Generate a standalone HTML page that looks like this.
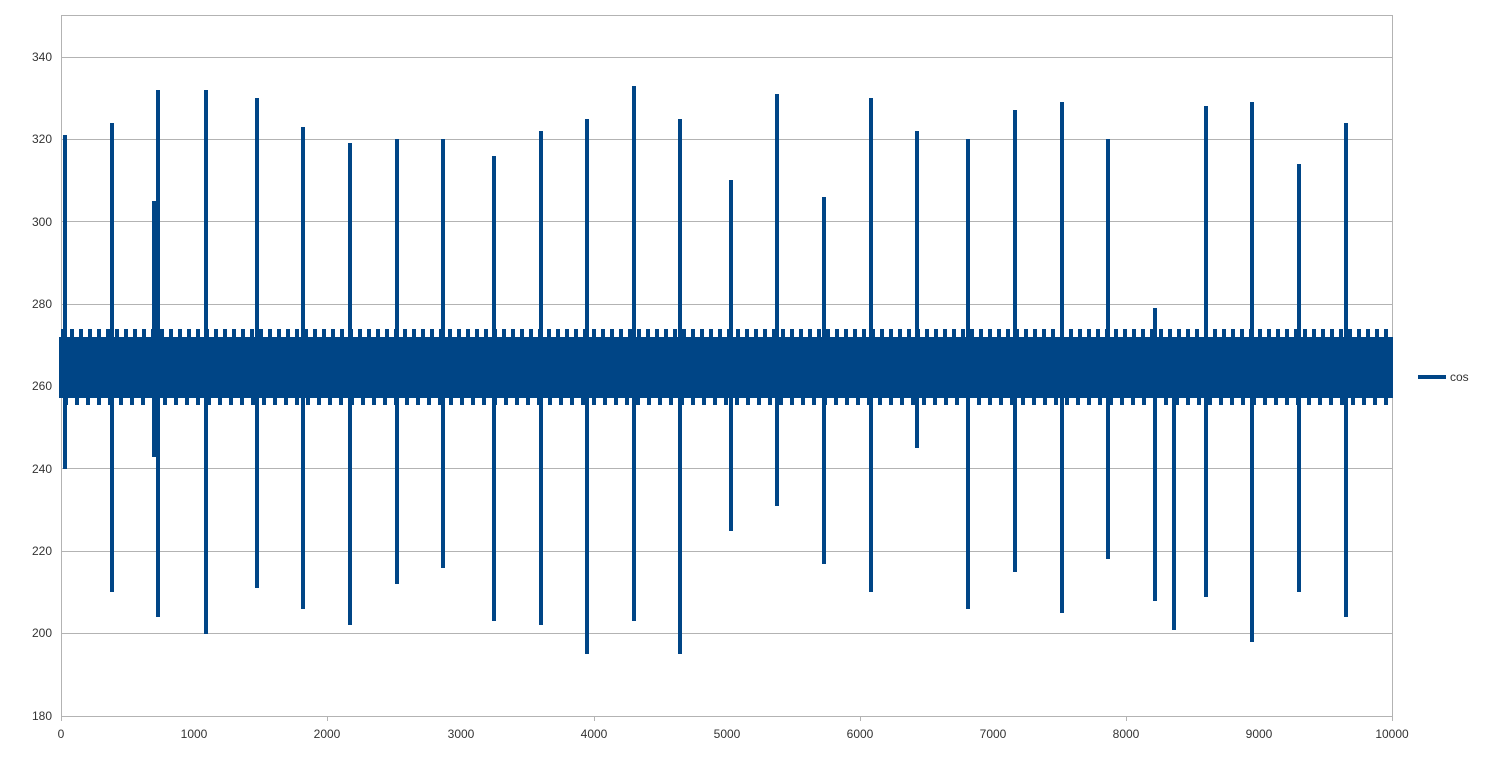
<!DOCTYPE html><html><head><style>body{margin:0;background:#fff;width:1512px;height:756px;overflow:hidden}text{font-family:"Liberation Sans",sans-serif;font-size:12px;fill:#333}</style></head><body>
<svg width="1512" height="756" xmlns="http://www.w3.org/2000/svg">
<defs>
<pattern id="t" x="61" y="0" width="9" height="10" patternUnits="userSpaceOnUse"><rect x="0" y="0" width="4" height="10" fill="#004586"/></pattern>
<pattern id="t2" x="64" y="0" width="11" height="10" patternUnits="userSpaceOnUse"><rect x="0" y="0" width="4" height="10" fill="#004586"/></pattern>
</defs>
<g stroke="#b3b3b3" stroke-width="1">
<line x1="61" y1="15.5" x2="1392" y2="15.5"/>
<line x1="61" y1="57.5" x2="1392" y2="57.5"/>
<line x1="61" y1="139.5" x2="1392" y2="139.5"/>
<line x1="61" y1="221.5" x2="1392" y2="221.5"/>
<line x1="61" y1="304.5" x2="1392" y2="304.5"/>
<line x1="61" y1="386.5" x2="1392" y2="386.5"/>
<line x1="61" y1="468.5" x2="1392" y2="468.5"/>
<line x1="61" y1="551.5" x2="1392" y2="551.5"/>
<line x1="61" y1="633.5" x2="1392" y2="633.5"/>
<line x1="61" y1="716.5" x2="1392" y2="716.5"/>
<line x1="61.5" y1="15" x2="61.5" y2="721"/>
<line x1="1392.5" y1="15" x2="1392.5" y2="721"/>
<line x1="327.5" y1="716" x2="327.5" y2="721"/><line x1="594.5" y1="716" x2="594.5" y2="721"/><line x1="860.5" y1="716" x2="860.5" y2="721"/><line x1="1126.5" y1="716" x2="1126.5" y2="721"/>
</g>
<rect x="59" y="337" width="1334" height="61" fill="#004586"/>
<rect x="61" y="329" width="1331" height="9" fill="url(#t)"/>
<rect x="61" y="397" width="1331" height="8" fill="url(#t2)"/>
<g stroke="#004586" stroke-width="4">
<line x1="65" y1="135" x2="65" y2="469"/>
<line x1="112" y1="123" x2="112" y2="592"/>
<line x1="158" y1="90" x2="158" y2="617"/>
<line x1="154" y1="201" x2="154" y2="457"/>
<line x1="206" y1="90" x2="206" y2="634"/>
<line x1="257" y1="98" x2="257" y2="588"/>
<line x1="303" y1="127" x2="303" y2="609"/>
<line x1="350" y1="143" x2="350" y2="625"/>
<line x1="397" y1="139" x2="397" y2="584"/>
<line x1="443" y1="139" x2="443" y2="568"/>
<line x1="494" y1="156" x2="494" y2="621"/>
<line x1="541" y1="131" x2="541" y2="625"/>
<line x1="587" y1="119" x2="587" y2="654"/>
<line x1="634" y1="86" x2="634" y2="621"/>
<line x1="680" y1="119" x2="680" y2="654"/>
<line x1="731" y1="180" x2="731" y2="531"/>
<line x1="777" y1="94" x2="777" y2="506"/>
<line x1="824" y1="197" x2="824" y2="564"/>
<line x1="871" y1="98" x2="871" y2="592"/>
<line x1="917" y1="131" x2="917" y2="448"/>
<line x1="968" y1="139" x2="968" y2="609"/>
<line x1="1015" y1="110" x2="1015" y2="572"/>
<line x1="1062" y1="102" x2="1062" y2="613"/>
<line x1="1108" y1="139" x2="1108" y2="559"/>
<line x1="1155" y1="308" x2="1155" y2="601"/>
<line x1="1174" y1="380" x2="1174" y2="630"/>
<line x1="1206" y1="106" x2="1206" y2="597"/>
<line x1="1252" y1="102" x2="1252" y2="642"/>
<line x1="1299" y1="164" x2="1299" y2="592"/>
<line x1="1346" y1="123" x2="1346" y2="617"/>
<line x1="1418" y1="377" x2="1446" y2="377"/>
</g>
<g text-anchor="end">
<text x="52" y="61">340</text><text x="52" y="143">320</text><text x="52" y="226">300</text><text x="52" y="308">280</text><text x="52" y="390">260</text><text x="52" y="473">240</text><text x="52" y="555">220</text><text x="52" y="637">200</text><text x="52" y="720">180</text>
</g>
<g text-anchor="middle">
<text x="61" y="738">0</text><text x="194" y="738">1000</text><text x="327" y="738">2000</text><text x="461" y="738">3000</text><text x="594" y="738">4000</text><text x="727" y="738">5000</text><text x="860" y="738">6000</text><text x="993" y="738">7000</text><text x="1126" y="738">8000</text><text x="1259" y="738">9000</text><text x="1392" y="738">10000</text>
</g>
<text x="1450" y="381">cos</text>
</svg></body></html>
